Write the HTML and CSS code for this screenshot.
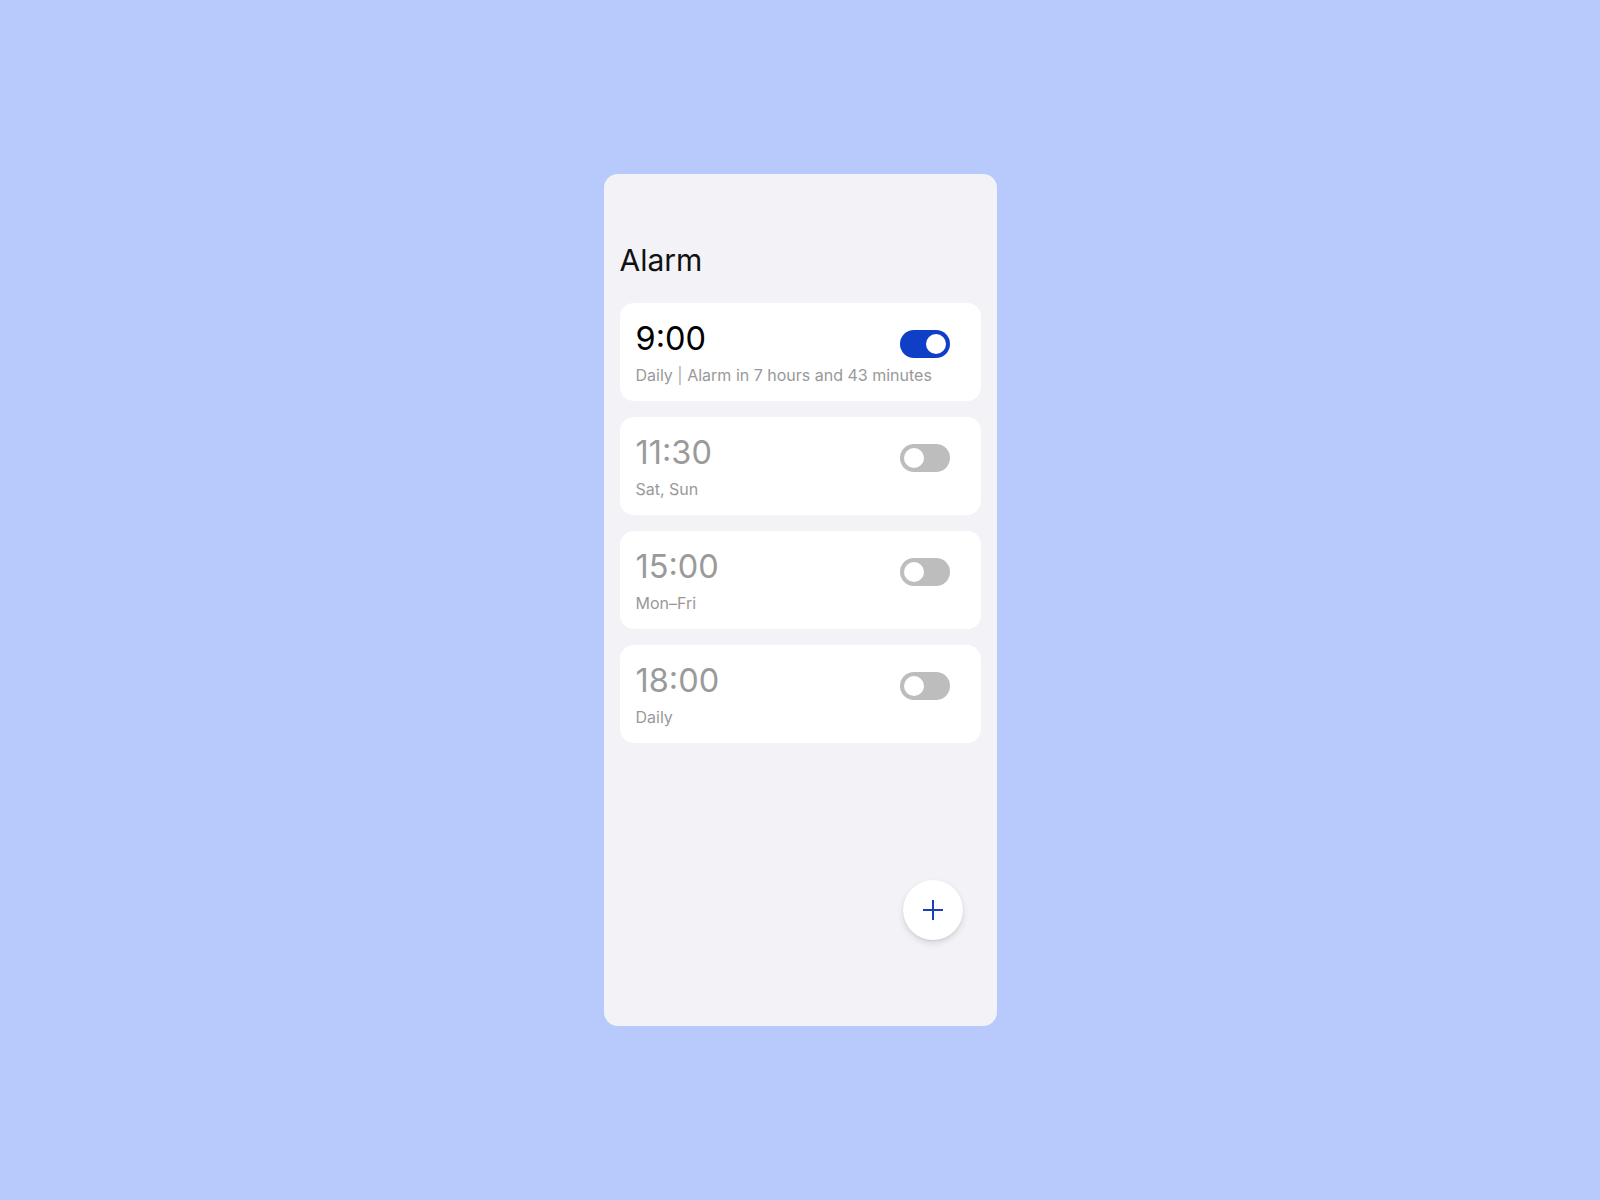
FILE: index.html
```html
<!DOCTYPE html>
<html lang="en">
<head>
<meta charset="utf-8">
<title>Alarm</title>
<link rel="stylesheet" href="styles.css">
</head>
<body>
<main class="stage">
  <section class="phone">
    <h1 class="title">Alarm</h1>
    <ul class="alarms">
      <li class="alarm on">
        <div class="row">
          <div class="time">9:00</div>
          <span class="toggle"><span class="knob"></span></span>
        </div>
        <div class="sub">Daily <span class="sep">|</span> Alarm in 7 hours and 43 minutes</div>
      </li>
      <li class="alarm">
        <div class="row">
          <div class="time">11:30</div>
          <span class="toggle"><span class="knob"></span></span>
        </div>
        <div class="sub">Sat, Sun</div>
      </li>
      <li class="alarm">
        <div class="row">
          <div class="time">15:00</div>
          <span class="toggle"><span class="knob"></span></span>
        </div>
        <div class="sub">Mon–Fri</div>
      </li>
      <li class="alarm">
        <div class="row">
          <div class="time">18:00</div>
          <span class="toggle"><span class="knob"></span></span>
        </div>
        <div class="sub">Daily</div>
      </li>
    </ul>
    <div class="fab-row">
      <button class="fab" aria-label="Add alarm">
        <svg width="22" height="22" viewBox="0 0 22 22"><path d="M11 1V21M1 11H21" stroke="#1a3fb8" stroke-width="2" fill="none"/></svg>
      </button>
    </div>
  </section>
</main>
</body>
</html>
```

FILE: styles.css
```css
* { box-sizing: border-box; }
html, body { margin: 0; padding: 0; }
body {
  background: #b8cafc;
  font-family: Inter, "Noto Sans", "Liberation Sans", sans-serif;
  width: 1600px;
  height: 1200px;
}
.stage {
  height: 1200px;
  display: flex;
  align-items: center;
  justify-content: center;
}
.phone {
  width: 393px;
  height: 852px;
  background: #f2f2f7;
  border-radius: 14px;
  padding: 68px 16px 0 16px;
  display: flex;
  flex-direction: column;
}
.title {
  margin: 0 0 25px 0;
  font-size: 30px;
  font-weight: 400;
  line-height: 36px;
  color: #111;
}
.alarms {
  list-style: none;
  margin: 0;
  padding: 0;
  display: flex;
  flex-direction: column;
  gap: 16px;
}
.alarm {
  background: #fff;
  border-radius: 14px;
  height: 98px;
  padding: 16px 31px 16px 16px;
  display: flex;
  flex-direction: column;
}
.row {
  display: flex;
  align-items: flex-start;
  justify-content: space-between;
}
.time {
  font-size: 32.5px;
  line-height: 39px;
  color: #9a9a9a;
  font-weight: 400;
}
.alarm.on .time { color: #000; }
.sub {
  margin-top: 8px;
  font-size: 16px;
  line-height: 19px;
  color: #999;
  white-space: nowrap;
}
.sep { color: #aaa; }
.toggle {
  margin-top: 11px;
  width: 50px;
  height: 28px;
  border-radius: 14px;
  background: #bdbdbd;
  position: relative;
  flex-shrink: 0;
}
.knob {
  position: absolute;
  top: 4px;
  left: 4px;
  width: 20px;
  height: 20px;
  border-radius: 50%;
  background: #fff;
}
.alarm.on .toggle { background: #0e3fc6; }
.alarm.on .knob { left: 26px; }
.fab-row {
  margin-top: auto;
  margin-bottom: 86px;
  display: flex;
  justify-content: flex-end;
  padding-right: 18px;
}
.fab {
  width: 60px;
  height: 60px;
  border-radius: 50%;
  border: none;
  background: #fff;
  box-shadow: 0 3px 6px rgba(0,0,0,0.12), 0 1px 2px rgba(0,0,0,0.06);
  display: flex;
  align-items: center;
  justify-content: center;
  padding: 0;
}
```
